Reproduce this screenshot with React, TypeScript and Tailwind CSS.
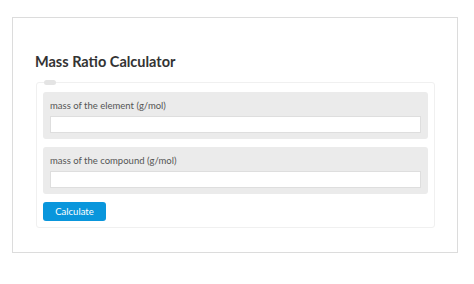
export default function App() {
    return (
        <div className="w-[474px] h-[284px] bg-white pt-[17px] pl-[12px] font-['Lato',sans-serif]">
            <div className="w-[446px] h-[236px] border border-[#dcdcdc] pl-[22px] pt-[34px]">
                <h1 className="text-[14.5px] leading-[20px] font-bold text-[#333]">
                    Mass Ratio Calculator
                </h1>
                <fieldset className="mt-[8px] ml-px w-[399px] border border-[#f0f0f0] rounded-[3px] px-[6px] pb-[6px]">
                    <legend className="ml-px w-[12px] h-[5px] rounded-full bg-[#e4e4e4]" />
                    <div className="flex flex-col gap-[8px] mt-[7px]">
                        <Field label="mass of the element (g/mol)" />
                        <Field label="mass of the compound (g/mol)" />
                    </div>
                    <button className="mt-[8px] w-[63px] h-[19px] rounded-[3px] bg-[#0996dc] text-white text-[9.5px] leading-[19px]">
                        Calculate
                    </button>
                </fieldset>
            </div>
        </div>
    );
}

function Field({ label }: { label: string }) {
    return (
        <div className="bg-[#ebebeb] rounded-[3px] px-[7px] pt-[7px] pb-[6px]">
            <div className="text-[9.5px] leading-[14px] text-[#555] mb-[3px]">{label}</div>
            <input className="block w-full h-[17px] bg-white border border-[#dedede] outline-none" />
        </div>
    );
}
